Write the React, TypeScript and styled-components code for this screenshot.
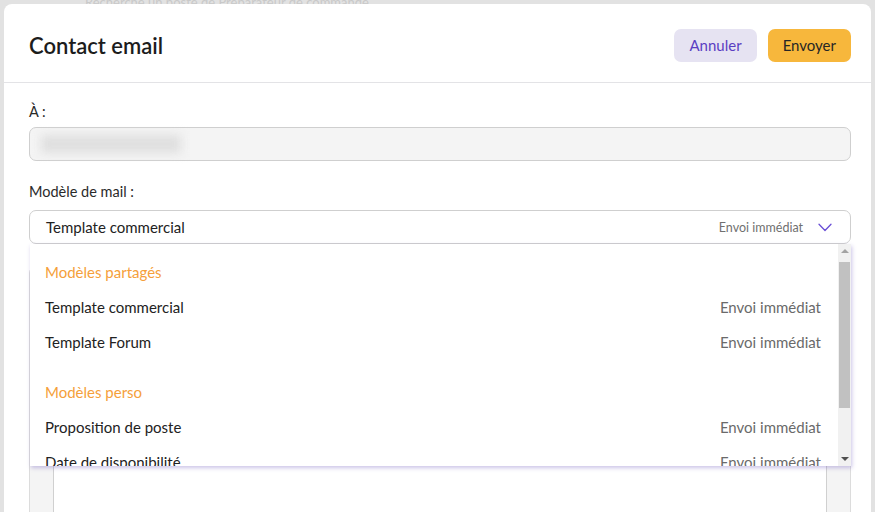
import styled, { createGlobalStyle } from "styled-components"

const GlobalStyle = createGlobalStyle`
  html, body {
    margin: 0;
    padding: 0;
    height: 100%;
    overflow: hidden;
  }
  body {
    background: #e2e2e2;
    font-family: Lato, "Noto Sans", "DejaVu Sans", sans-serif;
    color: #222;
  }
`

const Page = styled.div`
  position: relative;
  height: 512px;
  overflow: hidden;
  background: #e2e2e2;
`

const BehindText = styled.div`
  padding-left: 85px;
  margin-top: -5px;
  font-size: 13px;
  line-height: 14px;
  color: #c9c9c9;
  white-space: nowrap;
`

const Modal = styled.div`
  position: absolute;
  top: 4px;
  left: 4px;
  right: 4px;
  height: 560px;
  background: #fff;
  border-radius: 8px;
  display: flex;
  flex-direction: column;
`

const Header = styled.header`
  flex-shrink: 0;
  height: 79px;
  box-sizing: border-box;
  border-bottom: 1px solid #e3e3e6;
  display: flex;
  align-items: center;
  justify-content: space-between;
  padding: 0 20px 0 25px;
`

const Title = styled.h1`
  margin: 4px 0 0;
  font-size: 22px;
  font-weight: 600;
  color: #1c1c1c;
`

const Actions = styled.div`
  display: flex;
  gap: 11px;
  margin-top: 4px;
`

const Button = styled.button<{ $primary?: boolean }>`
  height: 33px;
  padding: 0 15px;
  border: none;
  border-radius: 7px;
  font-family: inherit;
  font-size: 15px;
  cursor: pointer;
  background: ${(p) => (p.$primary ? "#f7b73c" : "#e6e3f2")};
  color: ${(p) => (p.$primary ? "#262626" : "#5a3ec2")};
`

const Body = styled.div`
  flex-shrink: 0;
  padding: 20px 20px 0 25px;
  display: flex;
  flex-direction: column;
`

const Label = styled.label<{ $gap?: number }>`
  display: block;
  font-size: 14.5px;
  color: #2a2a2a;
  margin-bottom: ${(p) => p.$gap ?? 7}px;
`

const Field = styled.div`
  margin-bottom: 22px;
`

const ReadOnlyInput = styled.div`
  height: 34px;
  box-sizing: border-box;
  background: #f4f4f4;
  border: 1px solid #cfcfcf;
  border-radius: 7px;
  display: flex;
  align-items: center;
  padding: 0 11px;
`

const BlurredValue = styled.div`
  width: 140px;
  height: 18px;
  background: #dfdfdf;
  filter: blur(5px);
`

const SelectWrap = styled.div`
  position: relative;
`

const SelectBox = styled.div`
  height: 34px;
  box-sizing: border-box;
  background: #fff;
  border: 1px solid #cfcfcf;
  border-radius: 7px;
  display: flex;
  align-items: center;
  padding: 0 18px 0 16px;
  font-size: 15px;
  color: #222;
`

const SelectValue = styled.span`
  flex: 1;
`

const SelectMeta = styled.span`
  font-size: 12.5px;
  color: #707070;
  margin-right: 15px;
`

const Menu = styled.div`
  position: absolute;
  top: 34px;
  left: 1px;
  right: 0;
  height: 222px;
  background: #fff;
  box-shadow: 1px 2px 4px rgba(110, 90, 190, 0.35);
  display: flex;
  z-index: 5;
`

const MenuList = styled.ul`
  flex: 1;
  list-style: none;
  margin: 0;
  padding: 10px 0;
  overflow: hidden;
`

const GroupTitle = styled.li<{ $spaced?: boolean }>`
  height: 35px;
  display: flex;
  align-items: center;
  padding: 0 15px;
  font-size: 15px;
  color: #f5a03a;
  margin-top: ${(p) => (p.$spaced ? "15px" : "0")};
`

const Option = styled.li`
  height: 35px;
  display: flex;
  align-items: center;
  justify-content: space-between;
  padding: 0 17px 0 15px;
  font-size: 15px;
  color: #222;
`

const OptionMeta = styled.span`
  color: #6a6a6a;
`

const ScrollBar = styled.div`
  width: 13px;
  background: #f1f1f1;
  display: flex;
  flex-direction: column;
  align-items: center;
`

const ScrollArrow = styled.div<{ $down?: boolean }>`
  height: 14px;
  display: flex;
  align-items: center;
  justify-content: center;
  &::before {
    content: "";
    border-left: 4px solid transparent;
    border-right: 4px solid transparent;
    ${(p) =>
      p.$down ? "border-top: 4px solid #505050;" : "border-bottom: 4px solid #a3a3a3;"}
  }
`

const ScrollTrack = styled.div`
  flex: 1;
  width: 100%;
  padding: 4px 1px 0;
  box-sizing: border-box;
`

const ScrollThumb = styled.div`
  height: 146px;
  background: #c1c1c1;
`

const Editor = styled.div`
  height: 260px;
  box-sizing: border-box;
  background: #f4f4f4;
  border: 1px solid #dcdcdc;
  border-radius: 7px;
  padding: 40px 23px 0 23px;
  display: flex;
`

const EditorSheet = styled.div`
  flex: 1;
  background: #fff;
  border-left: 1px solid #d0d0d0;
  border-right: 1px solid #d0d0d0;
`

const Chevron = () => (
  <svg width="14" height="9" viewBox="0 0 14 9" fill="none">
    <path d="M1 1.2 L7 7.5 L13 1.2" stroke="#6a4fd6" strokeWidth="1.3" strokeLinecap="round" strokeLinejoin="round" />
  </svg>
)

type Template = { name: string; mode: string }

const shared: Template[] = [
  { name: "Template commercial", mode: "Envoi immédiat" },
  { name: "Template Forum", mode: "Envoi immédiat" },
]

const personal: Template[] = [
  { name: "Proposition de poste", mode: "Envoi immédiat" },
  { name: "Date de disponibilité", mode: "Envoi immédiat" },
  { name: "Relance candidat", mode: "Envoi immédiat" },
]

export default function App() {
  return (
    <Page>
      <GlobalStyle />
      <BehindText>Recherche un poste de Préparateur de commande</BehindText>
      <Modal>
        <Header>
          <Title>Contact email</Title>
          <Actions>
            <Button>Annuler</Button>
            <Button $primary>Envoyer</Button>
          </Actions>
        </Header>
        <Body>
          <Field>
            <Label>À :</Label>
            <ReadOnlyInput>
              <BlurredValue />
            </ReadOnlyInput>
          </Field>
          <Field>
            <Label $gap={10}>Modèle de mail :</Label>
            <SelectWrap>
              <SelectBox>
                <SelectValue>Template commercial</SelectValue>
                <SelectMeta>Envoi immédiat</SelectMeta>
                <Chevron />
              </SelectBox>
              <Menu>
                <MenuList>
                  <GroupTitle>Modèles partagés</GroupTitle>
                  {shared.map((t) => (
                    <Option key={t.name}>
                      <span>{t.name}</span>
                      <OptionMeta>{t.mode}</OptionMeta>
                    </Option>
                  ))}
                  <GroupTitle $spaced>Modèles perso</GroupTitle>
                  {personal.map((t) => (
                    <Option key={t.name}>
                      <span>{t.name}</span>
                      <OptionMeta>{t.mode}</OptionMeta>
                    </Option>
                  ))}
                </MenuList>
                <ScrollBar>
                  <ScrollArrow />
                  <ScrollTrack>
                    <ScrollThumb />
                  </ScrollTrack>
                  <ScrollArrow $down />
                </ScrollBar>
              </Menu>
            </SelectWrap>
          </Field>
          <Editor>
            <EditorSheet />
          </Editor>
        </Body>
      </Modal>
    </Page>
  )
}
